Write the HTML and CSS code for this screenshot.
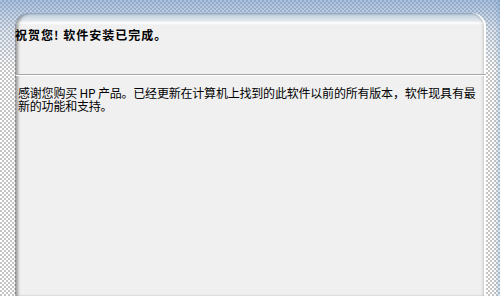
FILE: index.html
```html
<!DOCTYPE html>
<html lang="zh-CN">
<head>
    <meta charset="UTF-8">
    <meta name="viewport" content="width=device-width, initial-scale=1.0">
    <title>安装完成</title>
    <link rel="stylesheet" href="styles.css">
</head>
<body>
    <div class="panel">
        <div class="header">
            <h1 class="title">祝贺您! 软件安装已完成。</h1>
        </div>
        <div class="content">
            <p class="message">感谢您购买 HP 产品。已经更新在计算机上找到的此软件以前的所有版本，软件现具有最新的功能和支持。</p>
        </div>
    </div>
</body>
</html>
```

FILE: styles.css
```css
html, body {
    height: 100%;
}
body {
    margin: 0;
    overflow: hidden;
    font-family: "Noto Sans CJK SC", "Liberation Sans", sans-serif;
    font-size: 12px;
    color: #000;
    background-color: #fff;
    background-image:
        linear-gradient(to bottom, rgba(110,150,200,0.6) 0, rgba(140,170,210,0.3) 30px, rgba(255,255,255,0) 70px),
        linear-gradient(to left, rgba(110,160,200,0.35) 0, rgba(255,255,255,0) 6px),
        conic-gradient(#c4c4c4 25%, #fff 0 50%, #c4c4c4 0 75%, #fff 0);
    background-size: auto, auto, 4px 4px;
    display: flex;
    flex-direction: column;
}
.panel {
    flex: 1;
    margin: 13px 14px 0 16px;
    border-radius: 14px 14px 0 0;
    background: linear-gradient(to bottom, #9fb4cc 0, #c9d5e2 3px, #e4e9ef 8px, #ffffff 10px, #f0f0f0 12px, #f0f0f0 100%);
    box-shadow:
        inset 3px 0 3px -1px rgba(0,0,0,0.35),
        inset -2px 0 0 #ffffff,
        inset -4px 0 3px -1px rgba(0,0,0,0.18),
        -1px 0 0 rgba(90,90,90,0.5);
}
.header {
    height: 62px;
    box-sizing: border-box;
    padding-top: 15px;
    border-bottom: 1px solid #a8a8a8;
    box-shadow: 0 1px 0 #ffffff;
}
.title {
    margin: 0 0 0 -1px;
    font-size: 12px;
    line-height: 14px;
    font-weight: bold;
    letter-spacing: 1px;
}
.content {
    padding: 11px 0 0 2px;
}
.message {
    margin: 0;
    line-height: 13px;
    letter-spacing: -0.2px;
}
```
